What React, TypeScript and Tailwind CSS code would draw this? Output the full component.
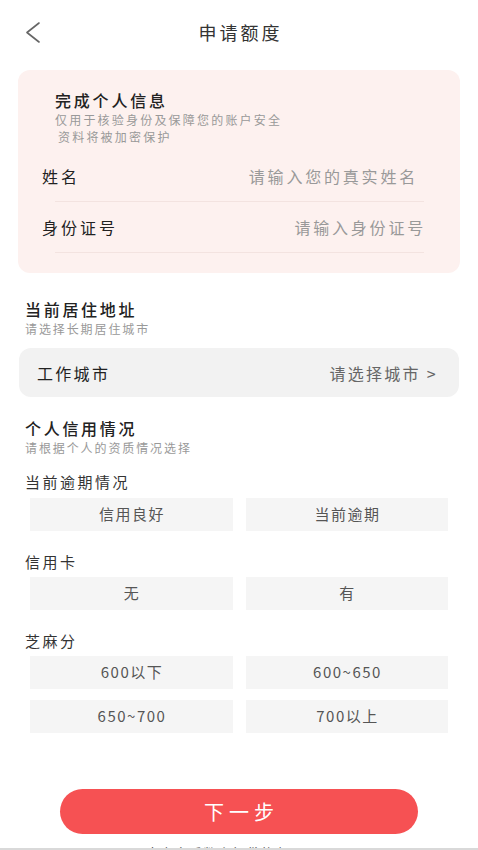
const font = {
  fontFamily: '"Noto Sans CJK SC", "Noto Sans", sans-serif',
};

function OptionRow({ options }: { options: string[] }) {
  return (
    <div className="mx-[30px] grid grid-cols-2 gap-x-[13px]">
      {options.map((option) => (
        <div
          key={option}
          className="flex h-[33px] items-center justify-center bg-[#f5f5f5] pl-[1.5px] text-[15px] tracking-[1.5px] text-[#555]"
        >
          {option}
        </div>
      ))}
    </div>
  );
}

function SectionHeader({ title, hint }: { title: string; hint: string }) {
  return (
    <div className="px-[25px]">
      <div className="text-[16px] leading-[23px] font-medium tracking-[2.7px] text-[#222]">
        {title}
      </div>
      <div className="text-[12px] leading-[16px] tracking-[1.9px] text-[#999]">
        {hint}
      </div>
    </div>
  );
}

function Label({ text }: { text: string }) {
  return (
    <div className="px-[25px] text-[15px] leading-[20px] tracking-[2.5px] text-[#333]">
      {text}
    </div>
  );
}

export default function App() {
  return (
    <div
      className="relative h-[850px] w-full overflow-hidden bg-white"
      style={font}
    >
      {/* header */}
      <div className="relative flex h-[64px] items-center justify-center">
        <svg
          className="absolute left-[25px] top-[22px]"
          width="16"
          height="21"
          viewBox="0 0 16 21"
          fill="none"
        >
          <polyline
            points="14,1 2,10.5 14,20"
            stroke="#666"
            strokeWidth="1.6"
            strokeLinecap="round"
            strokeLinejoin="round"
          />
        </svg>
        <div className="pl-[3px] text-[18px] tracking-[3px] text-[#333]">
          申请额度
        </div>
      </div>

      {/* personal info card */}
      <div className="mx-[18px] mt-[6px] rounded-[12px] bg-[#fdf1ef] pb-[20px] pt-[19px]">
        <div className="pl-[37px]">
          <div className="text-[16px] leading-[22px] font-medium tracking-[2.8px] text-[#222]">
            完成个人信息
          </div>
          <div className="text-[12px] leading-[17px] tracking-[2.2px] text-[#999]">
            仅用于核验身份及保障您的账户安全
          </div>
          <div className="ml-[3px] text-[12px] leading-[17px] tracking-[2.2px] text-[#999]">
            资料将被加密保护
          </div>
        </div>
        <div className="mt-[6px] flex h-[50px] items-center justify-between pl-[24px] pr-[42px]">
          <span className="text-[16px] tracking-[3px] text-[#222]">姓名</span>
          <span className="text-[16px] tracking-[2.8px] text-[#999]">
            请输入您的真实姓名
          </span>
        </div>
        <div className="ml-[37px] mr-[36px] h-px bg-[#f3e3e0]" />
        <div className="flex h-[50px] items-center justify-between pl-[24px] pr-[34px]">
          <span className="text-[16px] tracking-[3px] text-[#222]">
            身份证号
          </span>
          <span className="text-[16px] tracking-[2.8px] text-[#999]">
            请输入身份证号
          </span>
        </div>
        <div className="ml-[37px] mr-[36px] h-px bg-[#f3e3e0]" />
      </div>

      {/* address */}
      <div className="mt-[25px]">
        <SectionHeader title="当前居住地址" hint="请选择长期居住城市" />
      </div>
      <div className="mx-[19px] mt-[11px] flex h-[49px] items-center justify-between rounded-[12px] bg-[#f2f2f2] pl-[18px] pr-[21px]">
        <span className="text-[16px] tracking-[2.3px] text-[#222]">
          工作城市
        </span>
        <span className="text-[16px] tracking-[2.3px] text-[#666]">
          请选择城市 &gt;
        </span>
      </div>

      {/* credit */}
      <div className="mt-[20px]">
        <SectionHeader title="个人信用情况" hint="请根据个人的资质情况选择" />
      </div>

      <div className="mt-[16px]">
        <Label text="当前逾期情况" />
      </div>
      <div className="mt-[6px]">
        <OptionRow options={["信用良好", "当前逾期"]} />
      </div>

      <div className="mt-[21px]">
        <Label text="信用卡" />
      </div>
      <div className="mt-[5px]">
        <OptionRow options={["无", "有"]} />
      </div>

      <div className="mt-[21px]">
        <Label text="芝麻分" />
      </div>
      <div className="mt-[5px] flex flex-col gap-[11px]">
        <OptionRow options={["600以下", "600~650"]} />
        <OptionRow options={["650~700", "700以上"]} />
      </div>

      {/* next */}
      <div className="mx-[60px] mt-[56px] flex h-[45px] items-center justify-center rounded-full bg-[#f65153] pl-[5px] text-[20px] tracking-[5px] text-white">
        下一步
      </div>

      <div className="mt-[10px] text-center text-[13px] leading-[18px] tracking-[1.3px] text-[#555]">
        南京市乐数小额贷款有限公司
      </div>

      <div className="absolute bottom-0 left-0 h-[2px] w-full bg-[#d9d9d9]" />
    </div>
  );
}
